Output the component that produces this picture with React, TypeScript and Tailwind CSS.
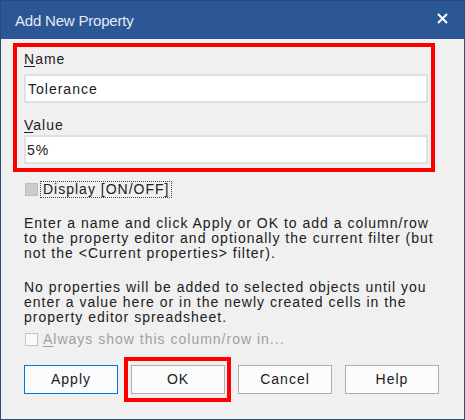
import React from "react";

const font = { fontFamily: '"Liberation Sans", Arial, sans-serif' };

function Btn({ label, primary }: { label: string; primary?: boolean }) {
  return (
    <div
      className={`w-[94px] h-[29px] flex items-center justify-center bg-[#fbfbfb] border text-[14px] tracking-[1px] text-[#202020] ${
        primary ? "border-[#0078d7]" : "border-[#adadad]"
      }`}
    >
      {label}
    </div>
  );
}

export default function App() {
  return (
    <div
      className="w-[465px] h-[420px] border border-[#2a4a78] bg-[#f0f0f0] flex flex-col overflow-hidden"
      style={font}
    >
      <div className="h-[38px] bg-[#2b5797] flex items-center justify-between pl-[14px] pr-[16px] shrink-0">
        <span className="text-[15px] text-[#e4eaf3] tracking-[-0.2px] mt-[3px]">Add New Property</span>
        <svg width="11" height="11" viewBox="0 0 11 11" className="-mt-[3px]">
          <path d="M1 1 L10 10 M10 1 L1 10" stroke="#ffffff" strokeWidth="2" />
        </svg>
      </div>

      <div className="flex flex-col text-[14px] tracking-[1px] text-[#202020]">
        <div className="mt-[4px] ml-[12px] w-[422px] h-[129px] border-4 border-[#ff0000] pl-[7px] flex flex-col">
          <div className="mt-[4px] leading-[16px] h-[16px]">
            <u className="underline-offset-2">N</u>ame
          </div>
          <div className="mt-[7px] w-[404px] h-[29px] bg-white border-2 border-[#e0e0e0] pl-[2px] flex items-center leading-[16px]">
            Tolerance
          </div>
          <div className="mt-[14px] leading-[16px] h-[16px]">
            <u className="underline-offset-2">V</u>alue
          </div>
          <div className="mt-[2px] w-[404px] h-[29px] bg-white border-2 border-[#e0e0e0] pl-[1px] flex items-center leading-[16px]">
            5%
          </div>
        </div>

        <div className="mt-[9px] ml-[24px] flex items-center h-[17px]">
          <div className="w-[13px] h-[13px] bg-[#cccccc] border border-[#bdbdbd]" />
          <div className="ml-[2px] h-[17px] border border-dotted border-[#444] px-[2px] flex items-center leading-[15px]">
            Display [ON/OFF]
          </div>
        </div>

        <div className="mt-[18px] ml-[23px] leading-[15px] whitespace-nowrap">
          Enter a name and click Apply or OK to add a column/row
          <br />
          to the property editor and optionally the current filter (but
          <br />
          not the &lt;Current properties&gt; filter).
        </div>

        <div className="mt-[19px] ml-[23px] leading-[15px] whitespace-nowrap">
          No properties will be added to selected objects until you
          <br />
          enter a value here or in the newly created cells in the
          <br />
          property editor spreadsheet.
        </div>

        <div className="mt-[6px] ml-[24px] flex items-center h-[17px] text-[#a0a0a0]">
          <div className="w-[13px] h-[13px] bg-[#fafafa] border border-[#c4c4c4]" />
          <div className="ml-[5px] leading-[15px]">
            <u className="underline-offset-2">A</u>lways show this column/row in...
          </div>
        </div>

        <div className="mt-[17px] ml-[23px] flex gap-[13px]">
          <Btn label="Apply" primary />
          <div className="relative">
            <Btn label="OK" />
            <div className="absolute -left-[7px] -top-[8px] -right-[6px] -bottom-[8px] border-4 border-[#ff0000]" />
          </div>
          <Btn label="Cancel" />
          <Btn label="Help" />
        </div>
      </div>
    </div>
  );
}
